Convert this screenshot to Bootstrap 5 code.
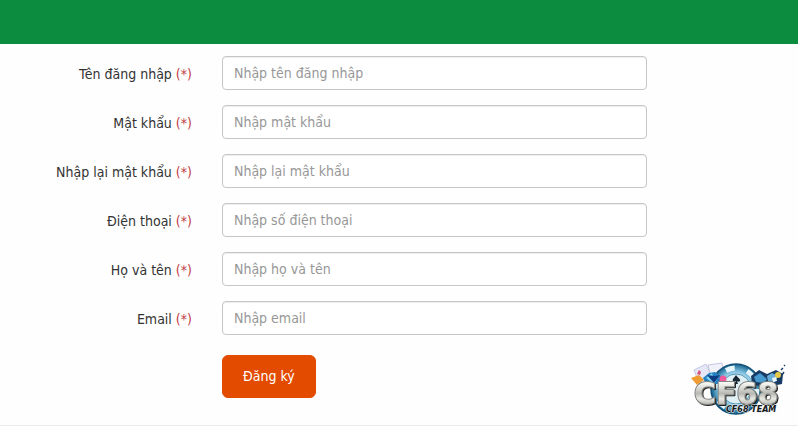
<!DOCTYPE html>
<html lang="vi">
<head>
<meta charset="utf-8">
<meta name="viewport" content="width=device-width, initial-scale=1">
<title>Đăng ký</title>
<link href="https://cdn.jsdelivr.net/npm/bootstrap@5.3.0/dist/css/bootstrap.min.css" rel="stylesheet">
<style>
body{font-family:"DejaVu Sans Condensed","DejaVu Sans",sans-serif;font-size:14px;line-height:20px;color:#333;background:#fefefe}
.topbar{height:44px;background:#0b8c3f}
.signup{padding:12px 21px 27px 27px;border-bottom:1px solid #e9e9e9}
.signup .row{--bs-gutter-x:30px;margin-bottom:15px}
.signup .col-form-label{padding-top:8px;padding-bottom:6px;line-height:20px}
.req{color:#c23b45}
.signup .form-control{height:34px;padding:6px 11px;font-size:14px;line-height:20px;border-color:#c6c6c6;border-radius:4px;box-shadow:inset 0 1px 1px rgba(0,0,0,.07)}
.signup .form-control::placeholder{color:#979797}
.signup .action-row{margin:20px -15px 0}
.btn-signup{--bs-btn-color:#fff;--bs-btn-bg:#e24b00;--bs-btn-border-color:#e24b00;--bs-btn-hover-color:#fff;--bs-btn-hover-bg:#c94300;--bs-btn-hover-border-color:#c94300;--bs-btn-padding-x:20px;--bs-btn-padding-y:11px;--bs-btn-font-size:14px;--bs-btn-border-radius:6px;line-height:19px}
.team-logo{right:10px;bottom:9px}
.team-logo text{font-family:"DejaVu Sans",sans-serif;font-weight:700;paint-order:stroke}
</style>
<script src="https://cdn.jsdelivr.net/npm/bootstrap@5.3.0/dist/js/bootstrap.bundle.min.js" defer></script>
</head>
<body>
<header class="topbar"></header>
<main class="position-relative">
<form class="signup">
<div class="row"><label class="col-3 col-form-label text-end" for="user">Tên đăng nhập <span class="req">(*)</span></label><div class="col-7"><input class="form-control" id="user" type="text" placeholder="Nhập tên đăng nhập"></div></div>
<div class="row"><label class="col-3 col-form-label text-end" for="pass">Mật khẩu <span class="req">(*)</span></label><div class="col-7"><input class="form-control" id="pass" type="password" placeholder="Nhập mật khẩu"></div></div>
<div class="row"><label class="col-3 col-form-label text-end" for="pass2">Nhập lại mật khẩu <span class="req">(*)</span></label><div class="col-7"><input class="form-control" id="pass2" type="password" placeholder="Nhập lại mật khẩu"></div></div>
<div class="row"><label class="col-3 col-form-label text-end" for="phone">Điện thoại <span class="req">(*)</span></label><div class="col-7"><input class="form-control" id="phone" type="tel" placeholder="Nhập số điện thoại"></div></div>
<div class="row"><label class="col-3 col-form-label text-end" for="fullname">Họ và tên <span class="req">(*)</span></label><div class="col-7"><input class="form-control" id="fullname" type="text" placeholder="Nhập họ và tên"></div></div>
<div class="row"><label class="col-3 col-form-label text-end" for="email">Email <span class="req">(*)</span></label><div class="col-7"><input class="form-control" id="email" type="email" placeholder="Nhập email"></div></div>
<div class="row action-row"><div class="col-7 offset-3"><button class="btn btn-signup" type="submit">Đăng ký</button></div></div>
</form>
<svg class="team-logo position-absolute" width="100" height="56" viewBox="0 0 100 56" role="img" aria-label="CF68 Team">
<defs>
<linearGradient id="silver" x1="0" y1="0" x2="0" y2="1"><stop offset=".2" stop-color="#f7f7f4"/><stop offset=".5" stop-color="#b9b9b4"/><stop offset=".65" stop-color="#e8e8e2"/><stop offset="1" stop-color="#85857f"/></linearGradient>
<radialGradient id="chip"><stop offset=".5" stop-color="#d8edf5"/><stop offset=".75" stop-color="#6fb5d6"/><stop offset="1" stop-color="#155f8b"/></radialGradient>
<filter id="bevel" x="-10%" y="-20%" width="120%" height="140%"><feDropShadow dx="1" dy="1" stdDeviation=".4" flood-color="#222"/></filter>
</defs>
<g stroke="#b9bdd8" stroke-width=".8"><path d="M6 9 18 3l9 19-13 7z" fill="#e5e7f7"/><path d="M20 4l14-2 4 18-13 4z" fill="#f1f1fa"/></g>
<path d="M11 9l2 2-1 3-3-1z" fill="#d45177"/><path d="M3 17l8-3 5 5-7 5z" fill="#ef9d32"/>
<circle cx="48" cy="28" r="25" fill="url(#chip)" stroke="#125077" stroke-width="1.5"/>
<circle cx="48" cy="28" r="21" fill="none" stroke="#e4f5fb" stroke-width="5" stroke-dasharray="9 13"/>
<circle cx="48" cy="28" r="15" fill="#e1f0f4" stroke="#4897bd"/>
<path d="M48 14c-2 3-4 4-3 6 1 1 2 1 3 0l-1 3h3l-1-3c1 1 2 1 3 0 1-2-2-3-4-6z" fill="#172630"/>
<path d="M15 17l6-5 6-1 8 6-2 6H18z" fill="#247fc1"/><path d="M18 17l6-5 2 6 5-3-5 8z" fill="#7fd4f4"/><path d="M19 14l7 8 6-8-5 1z" fill="#103b80"/>
<circle cx="35" cy="18" r="3.5" fill="#ee5a9b"/>
<path d="M63 15l8-6 8 4 9-4 7 4-1 10-20 4-10-5z" fill="#173b65"/><path d="M66 16l6-4 7 6-3 4-8-1z" fill="#4599ce"/><path d="M79 15l5-3 6 3-3 6-7-1z" fill="#68add8"/><circle cx="90" cy="14" r="3" fill="#e7ca48"/><path d="M84 17l4-1 1 4-4 1z" fill="#eef6fb"/>
<path d="M93 9l2-2m1-2 1-1M94 14l2-3" stroke="#173b65" stroke-width="1.4"/>
<text x="6" y="43" font-size="30" fill="url(#silver)" stroke="#858783" stroke-width="2" stroke-linejoin="round" filter="url(#bevel)">CF68</text>
<text x="38" y="51" font-size="8" font-style="italic" fill="#151719" stroke="#e9eeee" stroke-width="1">CF68 TEAM</text>
</svg>
</main>
</body>
</html>
